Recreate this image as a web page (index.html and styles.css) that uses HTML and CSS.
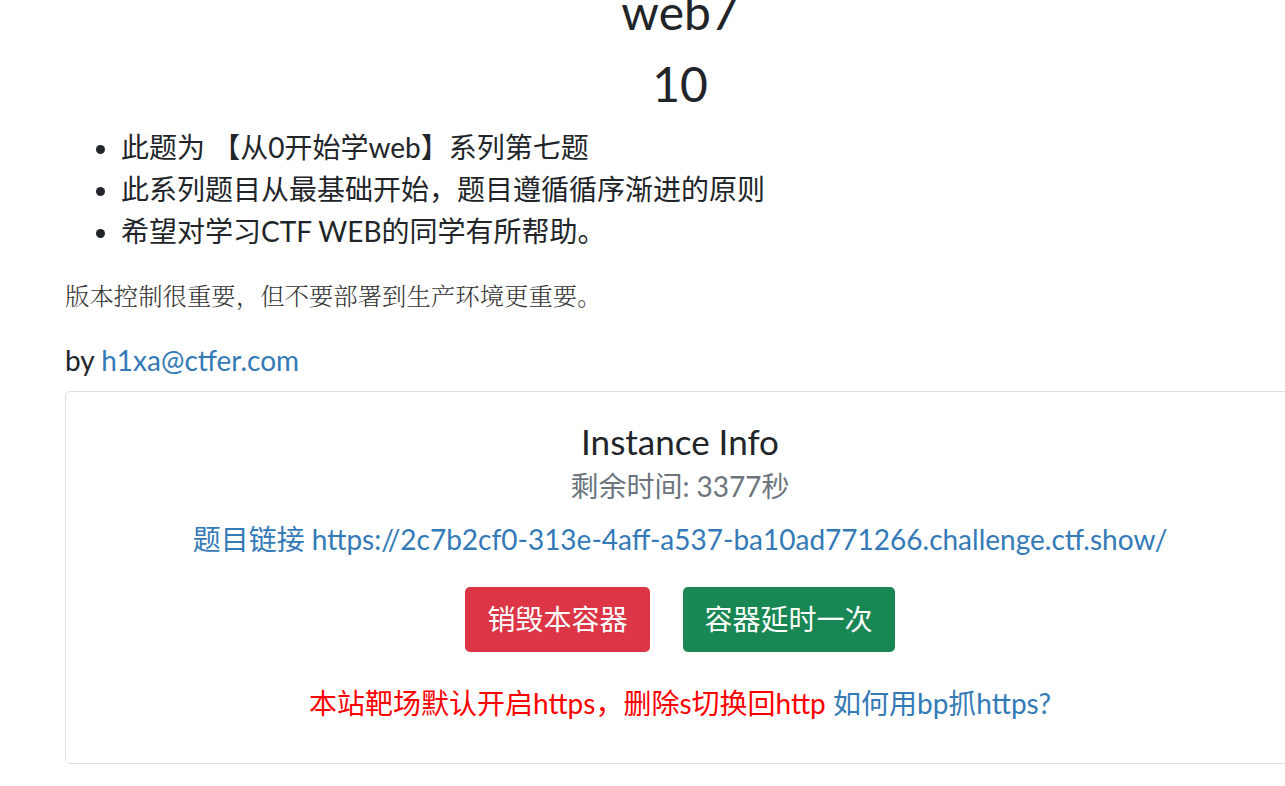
FILE: index.html
```html
<!DOCTYPE html>
<html lang="zh">
<head>
<meta charset="utf-8">
<title>web7</title>
<link rel="stylesheet" href="styles.css">
</head>
<body>
<div class="page">
  <h3 class="title first">web7</h3>
  <h3 class="title">10</h3>
  <ul class="desc">
    <li>此题为 【从0开始学web】系列第七题</li>
    <li>此系列题目从最基础开始，题目遵循循序渐进的原则</li>
    <li>希望对学习CTF WEB的同学有所帮助。</li>
  </ul>
  <p class="hint">版本控制很重要，但不要部署到生产环境更重要。</p>
  <p class="author">by <a href="#">h1xa@ctfer.com</a></p>
  <div class="card">
    <div class="card-body">
      <h5 class="card-title">Instance Info</h5>
      <h6 class="card-subtitle">剩余时间: 3377秒</h6>
      <p class="link-line"><a href="#">题目链接 https://2c7b2cf0-313e-4aff-a537-ba10ad771266.challenge.ctf.show/</a></p>
      <div class="actions">
        <button class="btn btn-danger">销毁本容器</button>
        <button class="btn btn-success">容器延时一次</button>
      </div>
      <p class="notice"><span class="red">本站靶场默认开启https，删除s切换回http</span> <a href="#">如何用bp抓https?</a></p>
    </div>
  </div>
</div>
</body>
</html>
```

FILE: styles.css
```css
html, body {
  margin: 0;
  padding: 0;
  overflow: hidden;
  background: #fff;
}
body {
  font-family: Lato, "Noto Sans CJK SC", sans-serif;
  font-size: 28px;
  line-height: 1.5;
  color: #212529;
}
a {
  color: #337ab7;
  text-decoration: none;
}
.page {
  width: 1230px;
  margin-left: 65px;
}
.title {
  font-size: 48px;
  font-weight: 400;
  line-height: 1.2;
  text-align: center;
  margin: 0 0 14px;
}
.title.first {
  margin-top: -17px;
}
.desc {
  margin: 0 0 27px;
  padding-left: 56px;
}
.hint {
  font-family: "Noto Serif CJK SC", "Liberation Serif", "Noto Sans CJK SC", serif;
  font-weight: 300;
  font-size: 24.4px;
  line-height: 31px;
  color: #333;
  margin: 0 0 29px;
}
.author {
  margin: 0 0 10px;
}
.card {
  border: 1px solid #dfdfdf;
  border-radius: 5px;
}
.card-body {
  padding: 28px;
  text-align: center;
}
.card-title {
  font-size: 35px;
  font-weight: 400;
  line-height: 1.2;
  margin: 0 0 14px;
}
.card-subtitle {
  font-size: 28px;
  font-weight: 400;
  line-height: 1.2;
  color: #6c757d;
  margin: -6px 0 14px;
}
.link-line {
  margin: 0 0 27px;
}
.actions {
  display: flex;
  justify-content: center;
  gap: 33px;
  margin-bottom: 30px;
}
.btn {
  font-family: inherit;
  font-size: 28px;
  line-height: 1.5;
  padding: 10.5px 21px;
  border: 1px solid transparent;
  border-radius: 5px;
  color: #fff;
}
.btn-danger {
  background: #dc3545;
}
.btn-success {
  background: #198754;
}
.notice {
  margin: 0 0 11px;
}
.red {
  color: #ff0000;
}
```
